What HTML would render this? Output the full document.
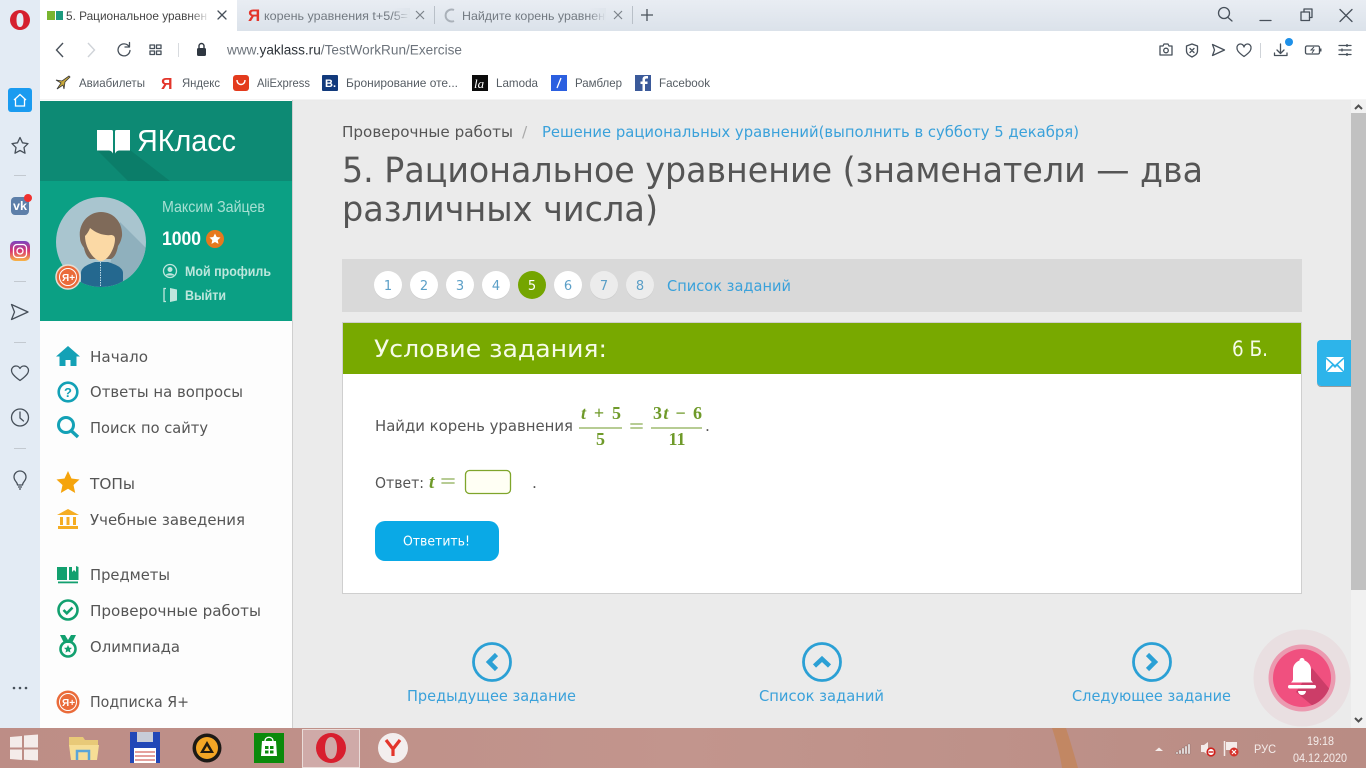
<!DOCTYPE html>
<html lang="ru"><head><meta charset="utf-8"><title>ЯКласс</title>
<style>
html,body{margin:0;padding:0;width:1366px;height:768px;overflow:hidden;background:#ebebeb}
svg{display:block}
text{font-family:"Liberation Sans","DejaVu Sans",sans-serif;fill:#555}
text.o{font-family:"DejaVu Sans","Liberation Sans",sans-serif}
text.m{font-family:"Liberation Serif","DejaVu Serif",serif;font-weight:bold;fill:#6f9a2a}
text.e{font-family:"Liberation Serif","DejaVu Serif",serif;font-weight:normal;fill:#6f9a2a}
.l{fill:none;stroke:#47505a;stroke-width:1.3;stroke-linecap:round;stroke-linejoin:round}
</style></head><body>
<svg width="1366" height="768" viewBox="0 0 1366 768" xmlns="http://www.w3.org/2000/svg">
<defs>
<linearGradient id="tb" x1="0" y1="0" x2="0" y2="1"><stop offset="0" stop-color="#e9edf3"/><stop offset="1" stop-color="#dbe2ea"/></linearGradient>
<linearGradient id="fw" x1="0" y1="0" x2="1" y2="0"><stop offset="0" stop-color="#fff" stop-opacity="0"/><stop offset="1" stop-color="#fff"/></linearGradient>
<linearGradient id="fg" x1="0" y1="0" x2="1" y2="0"><stop offset="0" stop-color="#dfe5ec" stop-opacity="0"/><stop offset="1" stop-color="#dfe5ec"/></linearGradient>
<linearGradient id="ig" x1="0" y1="0" x2="0" y2="1"><stop offset="0" stop-color="#7b45c0"/><stop offset=".5" stop-color="#d9366f"/><stop offset="1" stop-color="#f8b546"/></linearGradient>
<linearGradient id="task" x1="0" y1="0" x2="1" y2="0"><stop offset="0" stop-color="#bd8d86"/><stop offset=".5" stop-color="#c2958d"/><stop offset="1" stop-color="#b98c84"/></linearGradient>
<clipPath id="av"><circle cx="101" cy="242" r="45"/></clipPath>
<clipPath id="bell"><circle cx="1302" cy="678" r="29"/></clipPath>
<clipPath id="hd"><rect x="40" y="101" width="252" height="80"/></clipPath>
</defs>

<!-- page base -->
<rect width="1366" height="768" fill="#ebebeb"/>

<!-- opera chrome -->
<rect width="1366" height="31" fill="url(#tb)"/>
<rect x="0" y="0" width="40" height="728" fill="#e3ebf4"/>
<rect x="40" y="31" width="1326" height="69" fill="#fff"/>
<path d="M40 31V0H237V31Z" fill="#fff"/>

<!-- opera O -->
<path d="M20 10a10 10 0 1 0 0 20a10 10 0 1 0 0-20zM20 13c2.500 0 3.500 3 3.500 7s-1 7-3.500 7-3.500-3-3.500-7 1-7 3.500-7z" fill="#d5202e" fill-rule="evenodd"/>

<!-- tab 1 -->
<rect x="47" y="11" width="8" height="9" fill="#79b52f"/><rect x="56" y="11" width="7" height="9" fill="#1d9a7e"/>
<text x="66" y="20" font-size="12" textLength="141" lengthAdjust="spacingAndGlyphs" style="fill:#454545">5. Рациональное уравнен</text>
<rect x="190" y="8" width="20" height="16" fill="url(#fw)"/>
<path class="l" d="M218 11l8 8M226 11l-8 8"/>

<!-- tab 2 -->
<text x="248" y="21" font-size="17" style="fill:#e3352b" font-weight="bold">Я</text>
<text x="264" y="20" font-size="12" textLength="144" lengthAdjust="spacingAndGlyphs" style="fill:#737a82">корень уравнения t+5/5=</text>
<rect x="392" y="8" width="18" height="16" fill="url(#fg)"/>
<path d="M416 11l8 8M424 11l-8 8" fill="none" stroke="#7c838b" stroke-width="1.2"/>
<rect x="434" y="6" width="1" height="18" fill="#b9c0c8"/>

<!-- tab 3 -->
<path d="M454 10a6 6 0 1 0 0 11" fill="none" stroke="#aab1b9" stroke-width="2"/>
<text x="462" y="20" font-size="12" textLength="143" lengthAdjust="spacingAndGlyphs" style="fill:#737a82">Найдите корень уравнен</text>
<rect x="588" y="8" width="18" height="16" fill="url(#fg)"/>
<path d="M614 11l8 8M622 11l-8 8" fill="none" stroke="#7c838b" stroke-width="1.2"/>
<rect x="632" y="6" width="1" height="18" fill="#b9c0c8"/>
<path d="M647 9v12M641 15h12" fill="none" stroke="#4a525b" stroke-width="1.3"/>

<!-- window controls -->
<circle cx="1224" cy="13" r="5.5" class="l"/><path class="l" d="M1228 17.500l4 3.500"/>
<path class="l" d="M1260 20.500h11"/>
<rect x="1301" y="12" width="8.500" height="8.500" class="l"/><path class="l" d="M1304 12v-3h8v8.500h-2.500"/>
<path class="l" d="M1340 9.500l12 12M1352 9.500l-12 12"/>

<!-- toolbar left -->
<path d="M63 43l-6.500 7 6.500 7" fill="none" stroke="#4a525b" stroke-width="1.4"/>
<path d="M88 43l6.500 7-6.500 7" fill="none" stroke="#cfd3d8" stroke-width="1.4"/>
<path class="l" d="M129 46.500a6 6 0 1 0 1 4M129.500 42.500v4.500h-4.500"/>
<rect x="150" y="45" width="4.500" height="3.500" class="l"/><rect x="156.500" y="45" width="4.500" height="3.500" class="l"/><rect x="150" y="51" width="4.500" height="3.500" class="l"/><rect x="156.500" y="51" width="4.500" height="3.500" class="l"/>
<rect x="178" y="43" width="1" height="14" fill="#d8dbdf"/>
<rect x="197" y="48" width="9" height="8" rx="1.500" fill="#2f3741"/><path d="M199 48v-2a2.500 2.500 0 0 1 5 0v2" fill="none" stroke="#2f3741" stroke-width="1.4"/>
<text x="227" y="54.500" font-size="13.500" textLength="235" lengthAdjust="spacingAndGlyphs" style="fill:#6d747c">www.<tspan style="fill:#2d3339">yaklass.ru</tspan>/TestWorkRun/Exercise</text>

<!-- toolbar right -->
<path class="l" d="M1160 46h3l1-2h4l1 2h3v9h-12z"/><circle cx="1166" cy="50.500" r="2.300" class="l"/>
<path class="l" d="M1192 44l5.500 2v5c0 3-2.500 4.500-5.500 6-3-1.500-5.500-3-5.500-6v-5zM1190 48.500l4 4M1194 48.500l-4 4"/>
<path class="l" d="M1212.500 44.500l12 5.500-12 5.500 2-5.500z"/>
<path class="l" d="M1244 56.500c-7-5-7-7-7-8.500a3.500 3.500 0 0 1 7-1 3.500 3.500 0 0 1 7 1c0 1.500 0 3.500-7 8.500z"/>
<rect x="1260" y="43" width="1" height="15" fill="#cfd3d8"/>
<path class="l" d="M1280.500 44v9M1277 50l3.500 3.500 3.500-3.500M1274.500 53v2.500h12.500v-2.500"/>
<circle cx="1289" cy="42" r="4" fill="#1e90e8"/>
<rect x="1305.500" y="46" width="14" height="8" rx="1.500" class="l"/><rect x="1320" y="48.500" width="1.500" height="3" fill="#47505a"/><path d="M1314 47l-3 3h3l-2 3" fill="none" stroke="#47505a" stroke-width="1"/>
<path class="l" d="M1339 45.500h12M1339 50h12M1339 54.500h12"/><path d="M1347 44v3M1342 48.500v3M1347 53v3" stroke="#47505a" stroke-width="1.300"/>

<!-- bookmarks -->
<path d="M69 76l-7 5-6-1 5 3-4 6 6-4 1 4 1-7 5-5z" fill="#c9a93a" stroke="#3a3a3a" stroke-width=".8"/>
<text x="79" y="87" font-size="12" textLength="66" lengthAdjust="spacingAndGlyphs" style="fill:#555c63">Авиабилеты</text>
<text x="161" y="89" font-size="16" style="fill:#e3352b" font-weight="bold">Я</text>
<text x="182" y="87" font-size="12" textLength="38" lengthAdjust="spacingAndGlyphs" style="fill:#555c63">Яндекс</text>
<rect x="233" y="75" width="16" height="16" rx="3" fill="#e33b1d"/><path d="M237 80c0 6 8 6 8 0" fill="none" stroke="#fff" stroke-width="1.400"/>
<text x="257" y="87" font-size="12" textLength="53" lengthAdjust="spacingAndGlyphs" style="fill:#555c63">AliExpress</text>
<rect x="322" y="75" width="16" height="16" rx="1" fill="#123a7c"/><text x="325" y="87" font-size="11" font-weight="bold" style="fill:#fff">B.</text>
<text x="346" y="87" font-size="12" textLength="112" lengthAdjust="spacingAndGlyphs" style="fill:#555c63">Бронирование оте...</text>
<rect x="472" y="75" width="16" height="16" fill="#0b0b0b"/><text x="474" y="88" font-size="13" font-style="italic" style="font-family:'Liberation Serif',serif;fill:#fff">la</text>
<text x="496" y="87" font-size="12" textLength="42" lengthAdjust="spacingAndGlyphs" style="fill:#555c63">Lamoda</text>
<rect x="551" y="75" width="16" height="16" fill="#2b5fe0"/><path d="M561 78l-4 10" stroke="#fff" stroke-width="1.300"/>
<text x="575" y="87" font-size="12" textLength="47" lengthAdjust="spacingAndGlyphs" style="fill:#555c63">Рамблер</text>
<rect x="635" y="75" width="16" height="16" fill="#3b5a9a"/><path d="M645 91v-7h2.500v-2.500H645v-1.500c0-1 .5-1.500 1.500-1.500h1.500v-2.500h-2c-2.500 0-3.500 1.500-3.500 3.500v2h-2V84h2v7z" fill="#fff"/>
<text x="659" y="87" font-size="12" textLength="51" lengthAdjust="spacingAndGlyphs" style="fill:#555c63">Facebook</text>
<rect x="40" y="99.500" width="1326" height="1" fill="#e8e8e8"/>

<!-- left opera sidebar -->
<rect x="8" y="88" width="24" height="24" rx="3" fill="#1a9bf0"/>
<path d="M14 100l6-5.500 6 5.500M15.500 99v7h9v-7" fill="none" stroke="#fff" stroke-width="1.300"/>
<path class="l" d="M20 137.500l2.500 5.300 5.500.8-4 4 1 5.600-5-2.700-5 2.700 1-5.600-4-4 5.500-.8z"/>
<rect x="14" y="175" width="12" height="1" fill="#c3c9d0"/>
<rect x="11" y="197" width="18" height="18" rx="4" fill="#5d7fa9"/>
<text x="13" y="210" font-size="12" font-weight="bold" textLength="14" lengthAdjust="spacingAndGlyphs" style="fill:#fff">vk</text>
<circle cx="28" cy="198" r="4" fill="#f0312f"/>
<rect x="10" y="241" width="20" height="20" rx="5" fill="url(#ig)"/>
<rect x="13.500" y="244.500" width="13" height="13" rx="3.500" fill="none" stroke="#fff" stroke-width="1.300"/><circle cx="20" cy="251" r="3" fill="none" stroke="#fff" stroke-width="1.300"/>
<rect x="14" y="281" width="12" height="1" fill="#c3c9d0"/>
<path class="l" d="M11.500 304.500l16.500 7.500-16.500 7.500 3-7.500z"/>
<rect x="14" y="342" width="12" height="1" fill="#c3c9d0"/>
<path class="l" d="M20 380.500c-9-6.500-8.500-9-8.500-10.500a4.500 4.500 0 0 1 8.500-1.500 4.500 4.500 0 0 1 8.500 1.500c0 1.500.5 4-8.500 10.500z"/>
<circle cx="20" cy="417.500" r="8.500" class="l"/><path class="l" d="M20 412v6l3.500 3"/>
<rect x="14" y="448" width="12" height="1" fill="#c3c9d0"/>
<path class="l" d="M17.500 485c0-3-3.500-4-3.500-8a6 6 0 0 1 12 0c0 4-3.500 5-3.500 8z"/><path d="M18 487h4M19 489h2" stroke="#47505a" stroke-width="1.300"/>
<circle cx="14" cy="688" r="1.300" fill="#47505a"/><circle cx="20" cy="688" r="1.300" fill="#47505a"/><circle cx="26" cy="688" r="1.300" fill="#47505a"/>

<!-- site sidebar -->
<rect x="40" y="100" width="252" height="628" fill="#fdfdfd"/>
<rect x="292" y="100" width="1" height="628" fill="#cfcfcf"/>
<rect x="40" y="101" width="252" height="80" fill="#0d8a74"/>
<path d="M97 150L130 150 170 181H128Z" fill="#0b7d69" clip-path="url(#hd)"/>
<rect x="40" y="181" width="252" height="140" fill="#0ba084"/>
<path d="M97 130h14.500c1 0 1.500.5 1.500 1.500v22c-1-2-2.500-3-4-3H97z" fill="#fff"/>
<path d="M130 130h-13.500c-1 0-1.500.5-1.500 1.500v22c1-2 2.500-3 4-3h11z" fill="#fff"/>
<text x="137" y="151" font-size="31" textLength="99" lengthAdjust="spacingAndGlyphs" style="fill:#fff">ЯКласс</text>

<!-- avatar -->
<circle cx="101" cy="242" r="45" fill="#a9c5cf"/>
<path d="M120 222L150 252V290H104Z" fill="#8fb0bd" clip-path="url(#av)"/>
<path d="M81 287v-14c0-6 8-9 14-11h13c6 2 15 5 15 11v14z" fill="#24688f" clip-path="url(#av)"/>
<path d="M100.500 262v25" stroke="#bcd9e4" stroke-width="1" stroke-dasharray="1.500 1"/>
<path d="M80 238c-2-14 8-26 21-26 13 0 22 11 21 24-1 5-2 7-4 10-1 6-3 11-7 13H90c-3-2-5-6-6-11-2-3-4-6-4-10z" fill="#7f6a59"/>
<path d="M85 236c2-2 4-5 5-8 6 5 14 8 21 7 2 0 4 1 4 4 0 9-7 22-14 22s-16-13-16-25z" fill="#fbd9a5"/>
<circle cx="68" cy="277" r="12" fill="#ea6b3a" stroke="#e2ddd5" stroke-width="1.500"/>
<circle cx="68" cy="277" r="8.500" fill="none" stroke="#fff" stroke-width="1"/>
<text x="62" y="281" font-size="10" font-weight="bold" style="fill:#fff">Я+</text>

<text x="162" y="212" font-size="16" textLength="103" lengthAdjust="spacingAndGlyphs" style="fill:#a7e0d3">Максим Зайцев</text>
<text x="162" y="245" font-size="19" font-weight="bold" textLength="39" lengthAdjust="spacingAndGlyphs" style="fill:#fff">1000</text>
<circle cx="215" cy="239" r="9" fill="#e6791e"/>
<path d="M215 233.500l1.700 3.500 3.800.5-2.800 2.600.8 3.800-3.500-1.900-3.500 1.900.8-3.800-2.800-2.600 3.800-.5z" fill="#fff"/>
<circle cx="170" cy="271" r="6.500" fill="none" stroke="#bfe6dd" stroke-width="1.300"/><circle cx="170" cy="269.500" r="2.500" fill="#bfe6dd"/><path d="M165.500 275.500c1-3 8-3 9 0z" fill="#bfe6dd"/>
<text x="185" y="276" font-size="14" font-weight="bold" textLength="86" lengthAdjust="spacingAndGlyphs" style="fill:#bde6dc">Мой профиль</text>
<path d="M166 288.500h-2v13h2" fill="none" stroke="#bfe6dd" stroke-width="1.300"/><path d="M170 288l7 1.500v11l-7 1.500z" fill="#bfe6dd"/>
<text x="185" y="300" font-size="14" font-weight="bold" textLength="41" lengthAdjust="spacingAndGlyphs" style="fill:#bde6dc">Выйти</text>

<!-- menu icons -->
<path d="M68 346l-12 10.500h3.500V366h6v-6h5v6h6v-9.500H80z" fill="#13a1b6"/>
<circle cx="68" cy="392" r="9.300" fill="none" stroke="#13a1b6" stroke-width="2.600"/>
<text x="64" y="397" font-size="13" font-weight="bold" style="fill:#13a1b6">?</text>
<circle cx="66" cy="425" r="7.500" fill="none" stroke="#13a1b6" stroke-width="3"/><path d="M71.500 431l6.500 6" stroke="#13a1b6" stroke-width="3.400"/>
<path d="M68 471l3.500 7.500 8 1-6 5.500 1.700 8-7.200-4.200-7.200 4.200 1.700-8-6-5.500 8-1z" fill="#f5a40c"/>
<path d="M68 509l11 6H57z" fill="#f5ad22"/><rect x="60" y="517" width="3" height="8" fill="#f5ad22"/><rect x="66.500" y="517" width="3" height="8" fill="#f5ad22"/><rect x="73" y="517" width="3" height="8" fill="#f5ad22"/><rect x="58" y="526" width="20" height="3" fill="#f5ad22"/>
<path d="M57 567h10v13H57zM69 567h3v5l2-2 2 2v-6l2.500 1v13H69z" fill="#12a06f"/><rect x="58" y="581.500" width="20" height="1.800" fill="#12a06f"/>
<circle cx="68" cy="610" r="9.500" fill="none" stroke="#12a06f" stroke-width="2.600"/><path d="M63.500 610l3.300 3.300 5.700-5.700" fill="none" stroke="#12a06f" stroke-width="2.600"/>
<path d="M60 635h5l3 5 3-5h5l-4 8h-8z" fill="#12a06f"/><circle cx="68" cy="649" r="7.500" fill="none" stroke="#12a06f" stroke-width="2.600"/><path d="M68 645l1.200 2.600 2.800.3-2.100 1.900.6 2.800-2.500-1.400-2.500 1.400.6-2.800-2.100-1.900 2.800-.3z" fill="#12a06f"/>
<circle cx="68" cy="702" r="11.500" fill="#ea6b3a"/><circle cx="68" cy="702" r="8.500" fill="none" stroke="#fff" stroke-width="1"/>
<text x="62" y="706" font-size="10" font-weight="bold" style="fill:#fff">Я+</text>

<!-- menu text -->
<text class="o" x="90" y="362" font-size="15.500" textLength="58" lengthAdjust="spacingAndGlyphs">Начало</text>
<text class="o" x="90" y="397" font-size="15.500" textLength="153" lengthAdjust="spacingAndGlyphs">Ответы на вопросы</text>
<text class="o" x="90" y="433" font-size="15.500" textLength="118" lengthAdjust="spacingAndGlyphs">Поиск по сайту</text>
<text class="o" x="90" y="489" font-size="15.500" textLength="45" lengthAdjust="spacingAndGlyphs">ТОПы</text>
<text class="o" x="90" y="525" font-size="15.500" textLength="155" lengthAdjust="spacingAndGlyphs">Учебные заведения</text>
<text class="o" x="90" y="580" font-size="15.500" textLength="80" lengthAdjust="spacingAndGlyphs">Предметы</text>
<text class="o" x="90" y="616" font-size="15.500" textLength="171" lengthAdjust="spacingAndGlyphs">Проверочные работы</text>
<text class="o" x="90" y="652" font-size="15.500" textLength="90" lengthAdjust="spacingAndGlyphs">Олимпиада</text>
<text class="o" x="90" y="707" font-size="15.500" textLength="99" lengthAdjust="spacingAndGlyphs">Подписка Я+</text>

<!-- breadcrumbs + title -->
<text class="o" x="342" y="137" font-size="15.500" textLength="171" lengthAdjust="spacingAndGlyphs" style="fill:#555">Проверочные работы</text>
<text class="o" x="522" y="137" font-size="15.500" style="fill:#aaa">/</text>
<text class="o" x="542" y="137" font-size="15.500" textLength="537" lengthAdjust="spacingAndGlyphs" style="fill:#3aa1da">Решение рациональных уравнений(выполнить в субботу 5 декабря)</text>
<text class="o" x="342" y="182" font-size="35" textLength="861" lengthAdjust="spacingAndGlyphs" style="fill:#555">5. Рациональное уравнение (знаменатели — два</text>
<text class="o" x="342" y="221" font-size="35" textLength="316" lengthAdjust="spacingAndGlyphs" style="fill:#555">различных числа)</text>

<!-- pager -->
<rect x="342" y="259" width="960" height="53" fill="#d9d9d9"/>
<g>
<circle cx="388" cy="286" r="14" fill="#cfcfcf"/><circle cx="388" cy="285" r="14" fill="#fff"/>
<circle cx="424" cy="286" r="14" fill="#cfcfcf"/><circle cx="424" cy="285" r="14" fill="#fff"/>
<circle cx="460" cy="286" r="14" fill="#cfcfcf"/><circle cx="460" cy="285" r="14" fill="#fff"/>
<circle cx="496" cy="286" r="14" fill="#cfcfcf"/><circle cx="496" cy="285" r="14" fill="#fff"/>
<circle cx="532" cy="285" r="14" fill="#74a500"/>
<circle cx="568" cy="286" r="14" fill="#cfcfcf"/><circle cx="568" cy="285" r="14" fill="#fff"/>
<circle cx="604" cy="286" r="14" fill="#cfcfcf"/><circle cx="604" cy="285" r="14" fill="#ececec"/>
<circle cx="640" cy="286" r="14" fill="#cfcfcf"/><circle cx="640" cy="285" r="14" fill="#ececec"/>
</g>
<text class="o" x="388" y="290" font-size="13" text-anchor="middle" style="fill:#5b9fc7">1</text>
<text class="o" x="424" y="290" font-size="13" text-anchor="middle" style="fill:#5b9fc7">2</text>
<text class="o" x="460" y="290" font-size="13" text-anchor="middle" style="fill:#5b9fc7">3</text>
<text class="o" x="496" y="290" font-size="13" text-anchor="middle" style="fill:#5b9fc7">4</text>
<text class="o" x="532" y="290" font-size="13" text-anchor="middle" style="fill:#fff">5</text>
<text class="o" x="568" y="290" font-size="13" text-anchor="middle" style="fill:#5b9fc7">6</text>
<text class="o" x="604" y="290" font-size="13" text-anchor="middle" style="fill:#5b9fc7">7</text>
<text class="o" x="640" y="290" font-size="13" text-anchor="middle" style="fill:#5b9fc7">8</text>
<text class="o" x="667" y="291" font-size="15.500" textLength="124" lengthAdjust="spacingAndGlyphs" style="fill:#3aa1da">Список заданий</text>

<!-- task panel -->
<rect x="342.500" y="322.500" width="959" height="271" fill="#fff" stroke="#cfcfcf"/>
<rect x="343" y="323" width="958" height="51" fill="#78a900"/>
<text class="o" x="374" y="357" font-size="24" textLength="233" lengthAdjust="spacingAndGlyphs" style="fill:#f6fbe8">Условие задания:</text>
<text class="o" x="1232" y="356" font-size="21" textLength="36" lengthAdjust="spacingAndGlyphs" style="fill:#f6fbe8">6 Б.</text>

<text class="o" x="375" y="431" font-size="15.500" textLength="198" lengthAdjust="spacingAndGlyphs" style="fill:#555">Найди корень уравнения</text>
<text class="m" x="581" y="419" font-size="18" textLength="40"><tspan font-style="italic">t</tspan> + 5</text>
<rect x="579" y="427.500" width="43" height="1" fill="#6f9a2a"/>
<text class="m" x="600.500" y="445" font-size="18" text-anchor="middle">5</text>
<text class="e" x="629" y="433" font-size="20" textLength="15" lengthAdjust="spacingAndGlyphs">=</text>
<text class="m" x="653" y="419" font-size="18" textLength="49">3<tspan font-style="italic">t</tspan> − 6</text>
<rect x="651" y="427.500" width="51" height="1" fill="#6f9a2a"/>
<text class="m" x="677" y="445" font-size="18" text-anchor="middle">11</text>
<text class="o" x="705" y="431" font-size="15.500" style="fill:#555">.</text>

<text class="o" x="375" y="488" font-size="15.500" textLength="49" lengthAdjust="spacingAndGlyphs" style="fill:#555">Ответ:</text>
<text class="m" x="429" y="488" font-size="19" font-style="italic">t</text>
<text class="e" x="440" y="488" font-size="20" textLength="16" lengthAdjust="spacingAndGlyphs">=</text>
<rect x="465.500" y="470.500" width="45" height="23" rx="4" fill="#fffff4" stroke="#7fa52b" stroke-width="1.300"/>
<text class="o" x="532" y="488" font-size="15.500" style="fill:#555">.</text>

<rect x="375" y="521" width="124" height="40" rx="10" fill="#0aa9e6"/>
<text class="o" x="403" y="545.500" font-size="13.500" textLength="67" lengthAdjust="spacingAndGlyphs" style="fill:#fff">Ответить!</text>

<!-- bottom nav -->
<g fill="none" stroke="#2ba0d5" stroke-width="2.800">
<circle cx="492" cy="662" r="18.500"/><circle cx="822" cy="662" r="18.500"/><circle cx="1152" cy="662" r="18.500"/>
</g>
<g fill="none" stroke="#2ba0d5" stroke-width="4.500">
<path d="M496.500 654.500l-7.500 7.500 7.500 7.500"/><path d="M814.500 666l7.500-7 7.500 7"/><path d="M1147.500 654.500l7.500 7.500-7.500 7.500"/>
</g>
<text class="o" x="407" y="701" font-size="15.500" textLength="169" lengthAdjust="spacingAndGlyphs" style="fill:#3aa1da">Предыдущее задание</text>
<text class="o" x="759" y="701" font-size="15.500" textLength="125" lengthAdjust="spacingAndGlyphs" style="fill:#3aa1da">Список заданий</text>
<text class="o" x="1072" y="701" font-size="15.500" textLength="159" lengthAdjust="spacingAndGlyphs" style="fill:#3aa1da">Следующее задание</text>

<!-- scrollbar -->
<rect x="1351" y="100" width="15" height="628" fill="#f1f1f1"/>
<rect x="1351" y="113" width="15" height="477" fill="#c1c1c1"/>
<path d="M1355 109l3.500-3.500 3.500 3.500" fill="none" stroke="#505050" stroke-width="2"/>
<path d="M1355 718l3.500 3.500 3.500-3.500" fill="none" stroke="#505050" stroke-width="2"/>

<!-- mail tab -->
<path d="M1351 386h-30a4 4 0 0 1-4-4v-38a4 4 0 0 1 4-4h30z" fill="#2db4ea"/>
<path d="M1317 382a4 4 0 0 0 4 4h30v1h-30a4 4 0 0 1-4-4z" fill="#9a9a9a"/>
<path d="M1326 357h18l-9 8z" fill="#fff"/><path d="M1326 359v12l6-6.500zM1344 359v12l-6-6.500zM1327 372l6-6 2 2 2-2 6 6z" fill="#fff"/>

<!-- bell -->
<circle cx="1302" cy="678" r="48.500" fill="#e9dfe1"/>
<circle cx="1302" cy="678" r="33.500" fill="#eb9ab0"/>
<circle cx="1302" cy="678" r="29" fill="#f0507f"/>
<path d="M1312 668L1332 692 1320 712 1296 692Z" fill="#cc3d68" clip-path="url(#bell)"/>
<path d="M1302 658c-1.500 0-2.500 1-2.500 2.500-4 1.500-6.500 5-6.500 9v10c0 1-1 2-2 3h22c-1-1-2-2-2-3v-10c0-4-2.500-7.500-6.500-9 0-1.500-1-2.500-2.500-2.500z" fill="#fff"/>
<rect x="1288" y="685" width="28" height="3.500" rx="1.700" fill="#fff"/>
<path d="M1298 691h8a4 4 0 0 1-8 0z" fill="#fff"/>

<!-- taskbar -->
<rect x="0" y="728" width="1366" height="40" fill="url(#task)"/>
<path d="M1052 728h14c4 12 8 26 12 40h-16c-2-14-6-28-10-40z" fill="#c28763"/>
<path d="M10 737l12-1v11.500H10zM24 735.500l14-1v13H24zM10 749.500h12V760l-12-1zM24 749.500h14v11l-14-.8z" fill="#f4ecea"/>

<path d="M69 737h14l2 3h13v6H69z" fill="#e8c978"/><path d="M69 745h30l-2 15H71z" fill="#f6dd95"/><path d="M77 760v-9h12v9" fill="none" stroke="#5aa5d8" stroke-width="2.500"/>
<path d="M130 732h30v31h-30z" fill="#2147b7"/><rect x="137" y="732" width="16" height="10" fill="#c7ccd8"/><rect x="134" y="748" width="22" height="15" fill="#fff"/><path d="M135 752h20M135 756h20M135 760h20" stroke="#c8413a" stroke-width="1"/>
<circle cx="207" cy="748" r="14.500" fill="#1c1a16"/><circle cx="207" cy="748" r="11" fill="#f3a625"/><path d="M207 741l-7 12h14zM207 746l-3 5h6z" fill="#241d10" fill-rule="evenodd"/>
<rect x="254" y="733" width="30" height="30" fill="#0b8a0b"/><path d="M262 741h14l1 15h-16z" fill="#fff"/><path d="M265 741c0-5 8-5 8 0" fill="none" stroke="#fff" stroke-width="1.300"/><path d="M265 746h3.500v3H265zM270 746h3.500v3H270zM265 750.500h3.500v3H265zM270 750.500h3.500v3H270z" fill="#0b8a0b"/>
<rect x="302.500" y="729.500" width="57" height="38" fill="#cfaaa8" stroke="#eadcd9"/>
<path d="M331 733a15 15 0 1 0 0 30a15 15 0 1 0 0-30zM331 737c4 0 6 5 6 11s-2 11-6 11-6-5-6-11 2-11 6-11z" fill="#d81f2e" fill-rule="evenodd"/>
<circle cx="393" cy="748" r="15" fill="#f3eeee"/><path d="M386 740l7 9v7M400 740l-7 9" fill="none" stroke="#e3352b" stroke-width="3.200"/>

<!-- tray -->
<path d="M1155 751l4-3.500 4 3.500z" fill="#f4ecea"/>
<path d="M1176 752h2v2h-2zM1179 750h2v4h-2zM1182 748h2v6h-2zM1185 746h2v8h-2zM1188 744h2v10h-2z" fill="#f4ecea" stroke="#655" stroke-width=".3"/>
<path d="M1201 745h3l4-3v13l-4-3h-3z" fill="#f4ecea"/><circle cx="1211" cy="752" r="3.800" fill="#fff" stroke="#d0201c" stroke-width="1.600"/><path d="M1208.500 752h5" stroke="#d0201c" stroke-width="1.400"/>
<path d="M1224.500 741v15" stroke="#f4ecea" stroke-width="1.500"/><path d="M1226 742h11v8h-11z" fill="#f4ecea"/><circle cx="1234" cy="752" r="4.500" fill="#d6332c"/><path d="M1232 750l4 4M1236 750l-4 4" stroke="#fff" stroke-width="1.100"/>
<text x="1254" y="753" font-size="12" textLength="22" lengthAdjust="spacingAndGlyphs" style="fill:#f4ecea">РУС</text>
<text x="1307" y="745" font-size="12" textLength="27" lengthAdjust="spacingAndGlyphs" style="fill:#f4ecea">19:18</text>
<text x="1293" y="762" font-size="12" textLength="54" lengthAdjust="spacingAndGlyphs" style="fill:#f4ecea">04.12.2020</text>
</svg>
</body></html>
